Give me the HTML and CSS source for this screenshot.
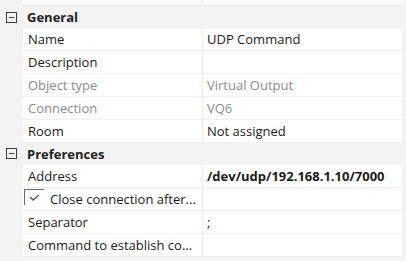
FILE: index.html
```html
<!DOCTYPE html>
<html lang="en">
<head>
    <meta charset="UTF-8">
    <meta name="viewport" content="width=device-width, initial-scale=1.0">
    <title>Properties</title>
    <link rel="stylesheet" href="styles.css">
</head>
<body>
<div class="grid">
    <div class="row partial">
        <div class="label"></div>
        <div class="value"></div>
    </div>

    <div class="category"><span class="toggle"></span>General</div>
    <div class="row">
        <div class="label">Name</div>
        <div class="value">UDP Command</div>
    </div>
    <div class="row">
        <div class="label">Description</div>
        <div class="value"></div>
    </div>
    <div class="row disabled">
        <div class="label">Object type</div>
        <div class="value">Virtual Output</div>
    </div>
    <div class="row disabled">
        <div class="label">Connection</div>
        <div class="value">VQ6</div>
    </div>
    <div class="row">
        <div class="label">Room</div>
        <div class="value">Not assigned</div>
    </div>

    <div class="category"><span class="toggle"></span>Preferences</div>
    <div class="row">
        <div class="label">Address</div>
        <div class="value bold">/dev/udp/192.168.1.10/7000</div>
    </div>
    <div class="row">
        <div class="label check-label">
            <span class="checkbox">
                <svg width="11" height="7" viewBox="0 0 11 7"><path d="M1 3 L4 6 L10 1" fill="none" stroke="#555" stroke-width="1.4"/></svg>
            </span>
            Close connection after...
        </div>
        <div class="value"></div>
    </div>
    <div class="row">
        <div class="label">Separator</div>
        <div class="value">;</div>
    </div>
    <div class="row">
        <div class="label">Command to establish co...</div>
        <div class="value"></div>
    </div>
</div>
</body>
</html>
```

FILE: styles.css
```css
body {
    margin: 0;
    background-color: #f3f3f3;
    font-family: "Segoe UI", "Open Sans", sans-serif;
    font-size: 13px;
    color: #1b1b1b;
    overflow: hidden;
}
.grid {
    width: 402px;
    margin-top: -17px;
}
.row {
    display: grid;
    grid-template-columns: 180px 1fr;
    height: 22.8px;
    margin-left: 23px;
    background-color: #fff;
    border-bottom: 1px solid #f0f0f0;
    box-sizing: border-box;
}
.row.partial {
    background-color: #fafafa;
    border-bottom: 1px solid #e6e6e6;
}
.label, .value {
    display: flex;
    align-items: center;
    white-space: nowrap;
    overflow: hidden;
}
.label {
    padding-left: 5px;
    border-right: 1px solid #f0f0f0;
}
.value {
    padding-left: 4px;
}
.bold {
    font-weight: bold;
}
.disabled .label, .disabled .value {
    color: #8c8c8c;
}
.category {
    display: flex;
    align-items: center;
    height: 22.8px;
    font-weight: bold;
    color: #222;
}
.toggle {
    position: relative;
    width: 11px;
    height: 11px;
    margin: 0 10px 0 6px;
    border: 1px solid #3a3a3a;
    box-sizing: border-box;
}
.toggle::after {
    content: "";
    position: absolute;
    left: 2px;
    right: 2px;
    top: 4px;
    height: 1px;
    background-color: #3a3a3a;
}
.check-label {
    padding-left: 1px;
    align-items: center;
}
.checkbox {
    display: flex;
    align-items: center;
    justify-content: center;
    align-self: flex-start;
    width: 19px;
    height: 15px;
    margin-top: 1px;
    margin-right: 6px;
    border-left: 1px solid #6a6a6a;
    border-top: 1px solid #6a6a6a;
}
```
